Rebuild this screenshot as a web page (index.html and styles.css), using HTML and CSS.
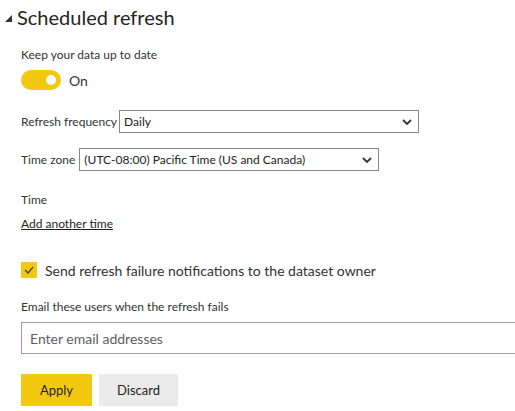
FILE: index.html
```html
<!DOCTYPE html>
<html>
<head>
<meta charset="utf-8">
<link rel="stylesheet" href="styles.css">
</head>
<body>
<div class="panel">
  <div class="title">
    <svg class="caret" width="7" height="7" viewBox="0 0 7 7"><polygon points="7,0 7,7 0,7" fill="#333"/></svg>
    <span>Scheduled refresh</span>
  </div>
  <div class="content">
    <div class="label keep">Keep your data up to date</div>
    <div class="toggle-row">
      <div class="toggle"><div class="knob"></div></div>
      <span class="toggle-text">On</span>
    </div>
    <div class="field-row freq">
      <span class="label">Refresh frequency</span>
      <div class="select select-freq">
        <span>Daily</span>
        <svg width="10" height="6" viewBox="0 0 10 6"><polyline points="1,1 5,5 9,1" fill="none" stroke="#333" stroke-width="1.8"/></svg>
      </div>
    </div>
    <div class="field-row tz">
      <span class="label">Time zone</span>
      <div class="select select-tz">
        <span>(UTC-08:00) Pacific Time (US and Canada)</span>
        <svg width="10" height="6" viewBox="0 0 10 6"><polyline points="1,1 5,5 9,1" fill="none" stroke="#333" stroke-width="1.8"/></svg>
      </div>
    </div>
    <div class="label time">Time</div>
    <a class="add-link">Add another time</a>
    <div class="check-row">
      <div class="checkbox">
        <svg width="10" height="8" viewBox="0 0 10 8"><polyline points="1,4 4,7 9,1" fill="none" stroke="#444" stroke-width="1.2"/></svg>
      </div>
      <span class="check-text">Send refresh failure notifications to the dataset owner</span>
    </div>
    <div class="label email-label">Email these users when the refresh fails</div>
    <div class="email-input">Enter email addresses</div>
    <div class="buttons">
      <button class="btn btn-apply">Apply</button>
      <button class="btn btn-discard">Discard</button>
    </div>
  </div>
</div>
</body>
</html>
```
FILE: styles.css
```css
html, body {
  margin: 0;
  padding: 0;
  background: #ffffff;
}
body {
  font-family: "Lato", "Noto Sans", sans-serif;
  color: #333333;
  width: 515px;
  height: 411px;
  overflow: hidden;
}
.panel {
  display: flex;
  flex-direction: column;
}
.title {
  display: flex;
  align-items: center;
  height: 30px;
  margin-top: 2px;
  padding-left: 5px;
  font-size: 20px;
  color: #252423;
}
.caret {
  margin-right: 5px;
  margin-top: 2px;
}
.content {
  display: flex;
  flex-direction: column;
  align-items: flex-start;
  padding-left: 21px;
}
.label {
  font-size: 12px;
  line-height: 16px;
  color: #333333;
}
.keep {
  margin-top: 15px;
}
.toggle-row {
  display: flex;
  align-items: center;
  margin-top: 7px;
  height: 20px;
}
.toggle {
  width: 40px;
  height: 20px;
  border-radius: 10px;
  background: #f2c811;
  display: flex;
  align-items: center;
  justify-content: flex-end;
  padding-right: 5px;
  box-sizing: border-box;
}
.knob {
  width: 10px;
  height: 10px;
  border-radius: 50%;
  background: #ffffff;
}
.toggle-text {
  font-size: 14px;
  margin-left: 8px;
}
.field-row {
  display: flex;
  align-items: center;
}
.field-row .label {
  margin-right: 2px;
}
.tz .label {
  margin-right: 4px;
}
.freq {
  margin-top: 20px;
}
.tz {
  margin-top: 15px;
}
.select {
  height: 23px;
  box-sizing: border-box;
  border: 1px solid #8a8886;
  display: flex;
  align-items: center;
  justify-content: space-between;
  padding: 0 6px 0 4px;
  font-size: 12px;
  color: #252423;
}
.select-freq {
  width: 300px;
}
.select-tz {
  width: 300px;
}
.time {
  margin-top: 21px;
}
.add-link {
  margin-top: 8px;
  font-size: 12px;
  line-height: 16px;
  color: #252423;
  text-decoration: underline;
}
.check-row {
  display: flex;
  align-items: center;
  margin-top: 30px;
  height: 16px;
}
.checkbox {
  width: 16px;
  height: 16px;
  background: #f2c811;
  display: flex;
  align-items: center;
  justify-content: center;
}
.check-text {
  font-size: 14px;
  margin-left: 8px;
  color: #333333;
}
.email-label {
  margin-top: 21px;
}
.email-input {
  margin-top: 7px;
  width: 500px;
  height: 32px;
  box-sizing: border-box;
  border: 1px solid #a19f9d;
  display: flex;
  align-items: center;
  padding-left: 8px;
  font-size: 14px;
  color: #605e5c;
}
.buttons {
  display: flex;
  gap: 7px;
  margin-top: 20px;
}
.btn {
  height: 32px;
  border: none;
  font-family: inherit;
  font-size: 13px;
  color: #252423;
  padding: 0;
}
.btn-apply {
  width: 71px;
  background: #f2c811;
}
.btn-discard {
  width: 79px;
  background: #eaeaea;
}
```
